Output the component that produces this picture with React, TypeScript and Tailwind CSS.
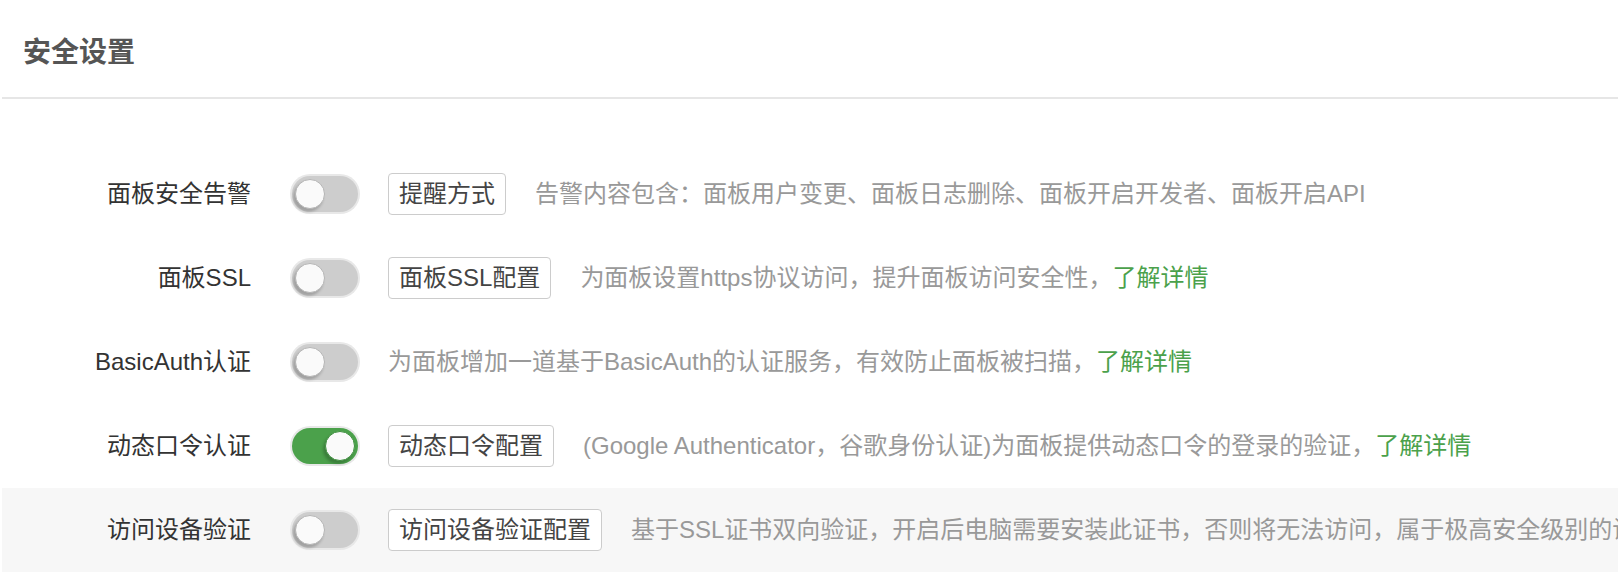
import React from "react";

type Row = {
  label: string;
  on?: boolean;
  button?: string;
  desc: string;
  link?: boolean;
  shaded?: boolean;
};

const rows: Row[] = [
  {
    label: "面板安全告警",
    button: "提醒方式",
    desc: "告警内容包含：面板用户变更、面板日志删除、面板开启开发者、面板开启API",
  },
  {
    label: "面板SSL",
    button: "面板SSL配置",
    desc: "为面板设置https协议访问，提升面板访问安全性，",
    link: true,
  },
  {
    label: "BasicAuth认证",
    desc: "为面板增加一道基于BasicAuth的认证服务，有效防止面板被扫描，",
    link: true,
  },
  {
    label: "动态口令认证",
    on: true,
    button: "动态口令配置",
    desc: "(Google Authenticator，谷歌身份认证)为面板提供动态口令的登录的验证，",
    link: true,
  },
  {
    label: "访问设备验证",
    button: "访问设备验证配置",
    desc: "基于SSL证书双向验证，开启后电脑需要安装此证书，否则将无法访问，属于极高安全级别的设置",
    shaded: true,
  },
];

function Toggle({ on }: { on?: boolean }) {
  return (
    <div
      className={
        on
          ? "relative h-[36px] w-[66px] shrink-0 rounded-full bg-[#4ba14b] shadow-[0_0_0_2px_#e8e8e8]"
          : "relative h-[36px] w-[66px] shrink-0 rounded-full bg-[#cdcdcd] shadow-[0_0_0_2px_#e8e8e8]"
      }
    >
      <span
        className={
          on
            ? "absolute right-[3px] top-[3px] h-[30px] w-[30px] rounded-full border border-[#3f8f3f] bg-[#fafafa] shadow-[-2px_3px_3px_rgba(0,0,0,0.22)]"
            : "absolute left-[3px] top-[3px] h-[30px] w-[30px] rounded-full border border-[#b5b5b5] bg-[#fafafa] shadow-[-2px_3px_3px_rgba(0,0,0,0.22)]"
        }
      />
    </div>
  );
}

function SettingRow({ row }: { row: Row }) {
  return (
    <div
      className={
        row.shaded
          ? "flex h-[84px] items-center whitespace-nowrap bg-[#f7f7f7]"
          : "flex h-[84px] items-center whitespace-nowrap"
      }
    >
      <div className="w-[249px] shrink-0 text-right text-[24px] text-[#333]">{row.label}</div>
      <div className="ml-[41px]">
        <Toggle on={row.on} />
      </div>
      <div className="ml-[30px] flex items-center">
        {row.button && (
          <button className="mr-[29px] flex h-[42px] items-center rounded-[4px] border border-[#cccccc] bg-white px-[10px] text-[24px] text-[#444]">
            {row.button}
          </button>
        )}
        <span className="text-[24px] text-[#999]">
          {row.desc}
          {row.link && <a className="text-[#4ba14b]">了解详情</a>}
        </span>
      </div>
    </div>
  );
}

export default function App() {
  return (
    <div
      className="h-[578px] w-full overflow-hidden bg-white pl-[2px]"
      style={{ fontFamily: '"Liberation Sans", "Noto Sans CJK SC", sans-serif' }}
    >
      <div className="flex h-[99px] items-center border-b-2 border-[#e6e6e6] pl-[21px] pt-[8px]">
        <h1 className="text-[28px] font-bold text-[#555]">安全设置</h1>
      </div>
      <div className="pt-[53px]">
        {rows.map((r) => (
          <SettingRow key={r.label} row={r} />
        ))}
      </div>
    </div>
  );
}
